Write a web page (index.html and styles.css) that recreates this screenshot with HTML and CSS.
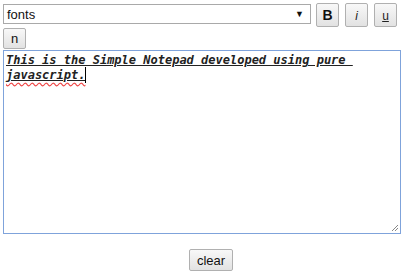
FILE: index.html
```html
<!DOCTYPE html>
<html lang="en">
<head>
  <meta charset="UTF-8">
  <title>Simple Notepad</title>
  <link rel="stylesheet" href="styles.css">
</head>
<body>
  <div class="toolbar">
    <div class="select-box">
      <span>fonts</span>
      <span class="arrow">&#9660;</span>
    </div>
    <button class="btn btn-tool"><b>B</b></button>
    <button class="btn btn-tool"><i>i</i></button>
    <button class="btn btn-tool"><u>u</u></button>
  </div>
  <div class="row">
    <button class="btn btn-small">n</button>
  </div>
  <div class="editor">
    <div class="text"><span class="line">This is the Simple Notepad developed using pure&nbsp;</span><br><span class="line"><span class="spell">javascript.</span></span><span class="caret"></span></div>
    <svg class="grip" width="9" height="9" viewBox="0 0 9 9">
      <path d="M8 2 L2 8 M8 5 L5 8" stroke="#888" stroke-width="1"/>
    </svg>
  </div>
  <div class="footer">
    <button class="btn btn-clear">clear</button>
  </div>
</body>
</html>
```

FILE: styles.css
```css
body {
  margin: 0;
  padding: 3px 3px 0 3px;
  font-family: 'Liberation Sans', Arial, sans-serif;
  background: #fff;
  width: 398px;
}
.toolbar {
  display: flex;
  align-items: flex-start;
}
.select-box {
  margin-top: 1px;
  border: 1px solid #a9a9a9;
  display: flex;
  align-items: center;
  justify-content: space-between;
  padding: 0 6px 0 3px;
  box-sizing: border-box;
  width: 308px;
  height: 20px;
  font-size: 13px;
  color: #111;
}
.arrow {
  font-size: 9px;
  color: #111;
}
.btn {
  font-family: 'Liberation Sans', Arial, sans-serif;
  font-size: 13px;
  color: #111;
  background: linear-gradient(#f8f8f8, #e2e2e2);
  border: 1px solid #b0b0b0;
  border-radius: 2px;
  padding: 0;
  box-sizing: border-box;
}
.btn-tool {
  width: 23px;
  height: 24px;
  margin-left: 6px;
}
.toolbar .btn-tool:first-of-type {
  margin-left: 5px;
}
.btn-tool b {
  font-size: 14px;
}
.btn-tool i, .btn-tool u {
  font-size: 12px;
  color: #222;
}
.row {
  display: flex;
  margin-top: 1px;
}
.btn-small {
  width: 23px;
  height: 21px;
}
.editor {
  position: relative;
  margin-top: 1px;
  width: 398px;
  height: 184px;
  border: 1px solid #7fa3db;
  box-sizing: border-box;
  padding: 2px 2px;
}
.text {
  font-family: 'DejaVu Sans Mono', monospace;
  font-size: 12px;
  font-weight: bold;
  font-style: italic;
  line-height: 15px;
  color: #222;
}
.line {
  text-decoration: underline;
}
.spell {
  text-decoration: underline wavy #e44;
  text-underline-offset: 3px;
}
.caret {
  display: inline-block;
  width: 1px;
  height: 16px;
  background: #000;
  vertical-align: top;
  margin-top: -1px;
}
.grip {
  position: absolute;
  right: 1px;
  bottom: 1px;
}
.footer {
  display: flex;
  justify-content: center;
  margin-top: 15px;
  padding-left: 18px;
}
.btn-clear {
  width: 44px;
  height: 22px;
  font-size: 13px;
}
```
